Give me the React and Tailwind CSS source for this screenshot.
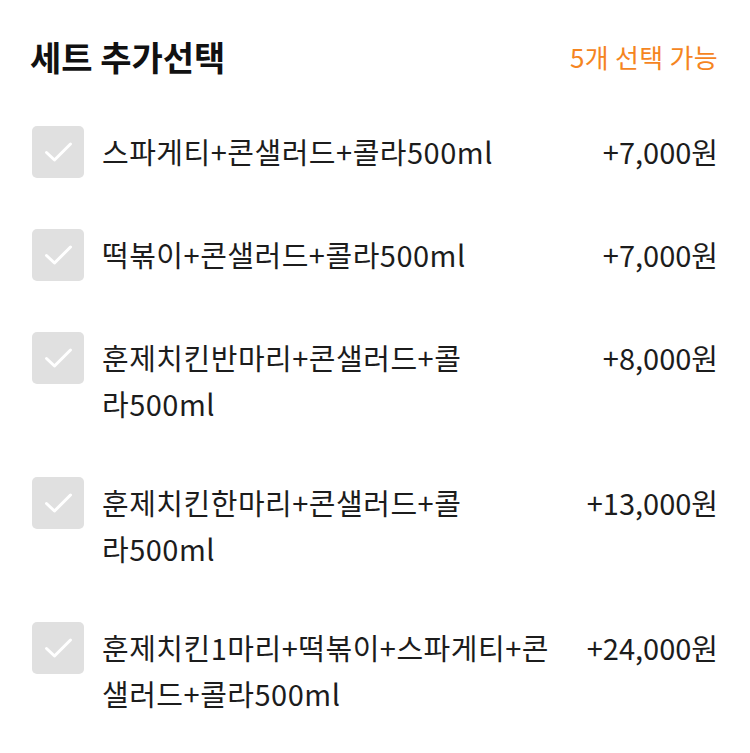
import React from "react";

const WJ = "\u2060";

const items = [
  { name: `스파게티+콘샐러드+콜라${WJ}500ml`, price: "+7,000원" },
  { name: `떡볶이+콘샐러드+콜라${WJ}500ml`, price: "+7,000원" },
  { name: `훈제치킨반마리+콘샐러드+콜라${WJ}500ml`, price: "+8,000원" },
  { name: `훈제치킨한마리+콘샐러드+콜라${WJ}500ml`, price: "+13,000원" },
  { name: `훈제치킨1마리+떡볶이+스파게티+콘샐러드+콜라${WJ}500ml`, price: "+24,000원" },
];

function Check() {
  return (
    <div className="w-[52px] h-[52px] shrink-0 rounded-[5px] bg-[#e0e0e0]">
      <svg width="52" height="52" viewBox="0 0 52 52" fill="none" stroke="#ffffff" strokeWidth="3" strokeLinecap="round" strokeLinejoin="round">
        <path d="M14.5 26.5L22.5 34L38.5 18" />
      </svg>
    </div>
  );
}

export default function App() {
  return (
    <div className="w-[750px] h-[753px] bg-white px-[32px] pt-[30px]" style={{ fontFamily: '"Noto Sans CJK KR", "Noto Sans", sans-serif' }}>
      <div className="flex items-center justify-between h-[52px]">
        <div className="text-[34px] font-bold text-[#111] -ml-[2px]">세트 추가선택</div>
        <div className="text-[26px] text-[#f5851f] tracking-[0.3px]">5개 선택 가능</div>
      </div>
      <div className="mt-[44px] flex flex-col gap-[51px]">
        {items.map((it, i) => (
          <div key={i} className="flex items-start">
            <Check />
            <div className="ml-[18px] w-[462px] pt-[2px] text-[29px] leading-[46px] text-[#1c1c1c] tracking-[0.5px]">
              {it.name}
            </div>
            <div className="flex-1 pt-[2px] text-right text-[29px] leading-[46px] text-[#1c1c1c]">{it.price}</div>
          </div>
        ))}
      </div>
    </div>
  );
}
